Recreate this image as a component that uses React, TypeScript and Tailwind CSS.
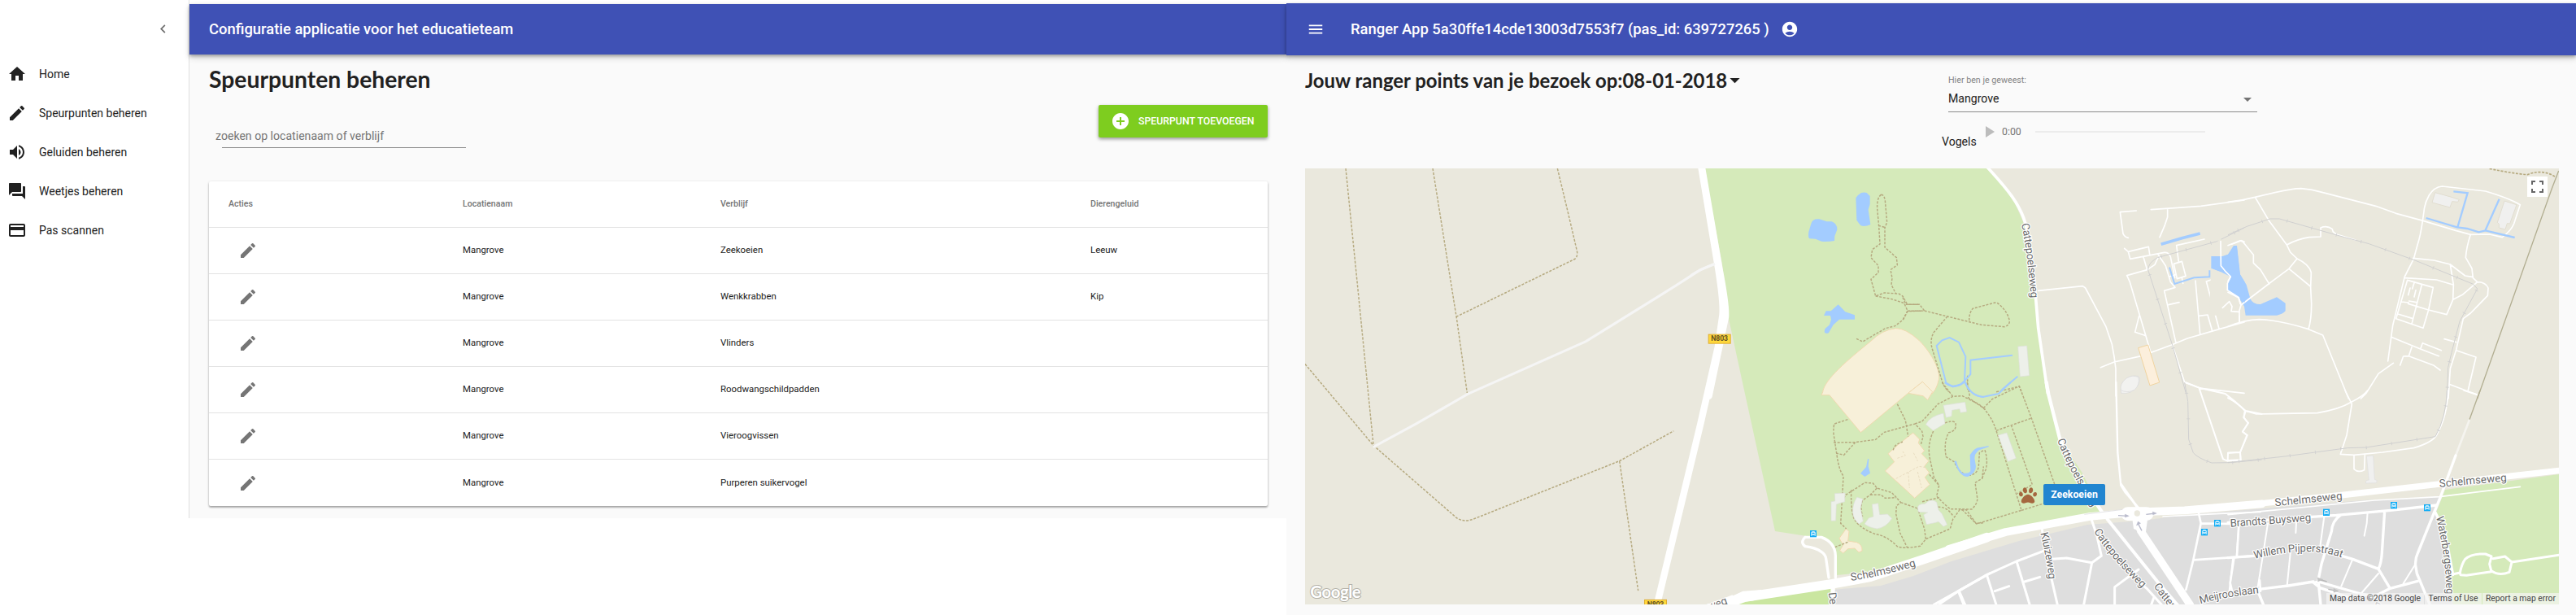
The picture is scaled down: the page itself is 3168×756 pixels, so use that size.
import React from "react";
import {
  MdHome, MdEdit, MdVolumeUp, MdForum, MdPayment, MdChevronLeft,
  MdAddCircle, MdMenu, MdAccountCircle, MdArrowDropDown,
} from "react-icons/md";
import { FaPaw } from "react-icons/fa";

const nav = [
  { label: "Home", Icon: MdHome },
  { label: "Speurpunten beheren", Icon: MdEdit },
  { label: "Geluiden beheren", Icon: MdVolumeUp },
  { label: "Weetjes beheren", Icon: MdForum },
  { label: "Pas scannen", Icon: MdPayment },
];

const rows = [
  ["Mangrove", "Zeekoeien", "Leeuw"],
  ["Mangrove", "Wenkkrabben", "Kip"],
  ["Mangrove", "Vlinders", ""],
  ["Mangrove", "Roodwangschildpadden", ""],
  ["Mangrove", "Vieroogvissen", ""],
  ["Mangrove", "Purperen suikervogel", ""],
];

const COLS = "grid grid-cols-[312px_317px_455px_1fr] items-center";

/* A map sector: its children use about three units to the pixel. */
function Sector({ x, y, sy = 3, children }: { x: number; y: number; sy?: number; children: React.ReactNode }) {
  return <g transform={`translate(${x} ${y}) scale(0.333333 ${1 / sy})`}>{children}</g>;
}

type LineProps = { d: string; w?: number; c?: string };

function Road({ d, w = 5, c = "#ffffff" }: LineProps) {
  return <path d={d} fill="none" stroke={c} strokeWidth={w} strokeLinejoin="round" strokeLinecap="round" />;
}

function Trail({ d, w = 4.4, c = "#b6aa80" }: LineProps) {
  return <path d={d} fill="none" stroke={c} strokeWidth={w} strokeDasharray="9 5" />;
}

function Rail({ d }: { d: string }) {
  return (
    <g fill="none" stroke="#d0d0d0">
      <path d={d} strokeWidth="3" />
      <path d={d} strokeWidth="13" strokeDasharray="2.5 92" strokeDashoffset="-40" />
    </g>
  );
}

function StreetName({ id, d, len, children }: { id: string; d: string; len: number; children: string }) {
  return (
    <g>
      <path id={id} d={d} fill="none" />
      <text fontFamily="Roboto, sans-serif" fontSize="40" fill="#6a6a6a" stroke="#ffffff" strokeWidth="7" strokeLinejoin="round" paintOrder="stroke" textLength={len}>
        <textPath href={`#${id}`}>{children}</textPath>
      </text>
    </g>
  );
}

function BusStop({ x, y }: { x: number; y: number }) {
  return (
    <g transform={`translate(${x} ${y})`}>
      <rect x="-12" y="-12" width="24" height="25" fill="#12adf5" />
      <path d="M-8 8V-3q0-5 5-5h6q5 0 5 5V8h-3v-2h-10v2z" fill="#fff" />
      <rect x="-5" y="-4" width="10" height="5" fill="#12adf5" />
      <rect x="-5" y="3" width="3" height="2" fill="#12adf5" />
      <rect x="2" y="3" width="3" height="2" fill="#12adf5" />
    </g>
  );
}

function Shield({ x, y }: { x: number; y: number }) {
  return (
    <g transform={`translate(${x} ${y})`}>
      <rect x="1.5" y="1.5" width="81" height="33" fill="#ffd83b" stroke="#e0af30" strokeWidth="3" />
      <text x="42" y="26" textAnchor="middle" fontFamily="Roboto, sans-serif" fontWeight="700" fontSize="26" fill="#5f4f22" textLength="62">N803</text>
    </g>
  );
}

function MapDrawing() {
  const water = "#a3ccff";
  const building = { fill: "#edf0ea", stroke: "#dcdfd8", strokeWidth: 2 };
  const sand = { fill: "#f7f0d9", stroke: "#f0d9b0", strokeWidth: 3 };
  return (
    <svg className="block h-full w-full" viewBox="1605 207 1542 536">
      <rect x="1605" y="207" width="1542" height="536" fill="#eae8dd" />
      {/* land areas */}
      <path fill="#d5eaba" d="M2096 207L2118 325 2126 392 2144 475 2183 653 2222 659 2242 660 2255 672 2259 707 2300 703 2345 692 2440 663 2520 642 2585 630 2560 580 2533 540 2515 470 2503 357 2490 277 2475 243 2462 225 2443 207z" />
      <path fill="#dedede" d="M2253 725L2313 720 2353 708 2400 690 2483 665 2567 645 2633 640 2700 632 2807 623 2907 615 3003 610 2997 630 3005 680 3017 743H2257z" />
      <path fill="#d5eaba" d="M3007 602L3147 583V743H3017L3005 680 2996 630z" />
      <path fill="#cae6a0" d="M2123 743L2135 738 2253 723 2257 743z" />

      {/* open fields in the west */}
      <Sector x={1590} y={200} sy={2.82}>
        <Trail d="M195 20L240 440 297 978M516 20L605 545 643 798M976 20Q1030 230 1049 310Q1050 328 1040 334L605 533M45 698L297 980 600 1228Q628 1250 670 1234L1205 1034 1405 930M1205 1034L1274 1484" />
        <Road d="M300 984L455 905 645 802 1080 620 1415 425 1500 373 1560 349" w={9} c="#f5f5f5" />
        <Road d="M1506 10L1570 370Q1590 490 1585 530L1568 640 1504 905 1344 1530" w={25} />
        <Road d="M1535 1536L1620 1505" w={12} />
        <Shield x={1296} y={1514} />
        <text x="64" y="1510" fontFamily="Lato, sans-serif" fontSize="61" fontWeight="700" fill="#ffffff" stroke="#b3b1a8" strokeWidth="6" paintOrder="stroke" textLength="187">Google</text>
      </Sector>

      {/* northern park */}
      <Sector x={2080} y={200}>
        <Road d="M0 415Q40 388 90 373" w={9} c="#f5f5f5" />
        <Road d="M36 0L103 390Q130 530 126 570L65 860" w={25} />
        <g fill={water}>
          <path d="M442 225q5-20 30-17l28 9 18 0q22 10 20 30l-9 24-1 17q-25 4-48 2l-22-9-22-1q-6-4-3-25z" />
          <path d="M607 130q15-25 40-19l12 12 0 30-6 20 8 55q-20 10-36 4l-15-20z" />
          <path d="M497 547h18l27-24 26 27 35 12v16h-57l-22 20-17 29q-10 6-16-2l2-12 17-15 6-20-3-14h-24z" />
        </g>
        <Trail d="M700 118Q712 118 715 140L722 220 714 240V312L757 350 760 377 735 395 741 425 738 450 754 482M700 118Q684 130 686 170L692 235 696 300 668 320 663 350 690 380 690 405 663 430 680 492 712 480 765 483 780 492 797 523H840M690 232L714 238M680 492L740 503 785 518 798 546 780 580 752 602 716 611 632 660 607 648M798 547H850" />
        <Shield x={62} y={632} />
      </Sector>

      <Sector x={2340} y={200}>
        <path {...sand} d="M-295 846C-290 800-200 725-120 660Q-75 615-25 611Q10 610 60 655C110 705 140 770 133 800Q125 840 100 860L73 808 20 850-155 995-270 857-300 857z" />
        <path {...sand} d="M20 850L73 808 110 845 92 875 75 860z" />
        <Trail d="M0 497L12 523H62L80 546 18 548 0 582M80 546L165 567 290 598 375 605Q395 600 394 582Q385 545 350 518L340 516 258 538Q242 560 246 587M165 567L115 625Q98 655 110 690L145 805Q150 825 170 845M239 785V840M345 845Q390 835 430 825L440 850" />
        <g fill="none" stroke={water} strokeWidth="6">
          <path d="M125 675L145 655 173 645 207 662 232 715 228 805 213 818 185 826 160 812zM405 710L250 728V780L228 805 240 830 250 842 M424 788L365 838" />
        </g>
        <path {...building} d="M425 678L458 675 467 785 433 789z" />
        <Road d="M306 10C360 70 440 150 456 240L485 430 500 610 535 850" w={11} />
        <Road d="M500 472L664 455 674 462 750 605 772 670 780 715 786 760V860M730 755L780 735 880 713 990 673 1050 648 1170 613 1260 588M862 177L802 182 813 262Q820 275 832 277M916 173L1100 160 1260 138M977 172V200L966 233 948 275M818 316L832 328 839 355 965 331M832 328L907 310 911 337M888 348L902 395 827 416 838 440 915 700M902 395L930 376 942 350M872 565L857 625 893 637M965 331Q982 330 988 347L1004 425M942 338L970 380 988 440 1005 460 965 472 1008 665M1113 282L1010 305 1018 365M1000 373L1030 364 1044 418 1012 428zM1030 425L1034 445M985 420L1007 413M980 524L1020 515M1080 435L1097 632M1173 290L1174 380 1190 400 1210 420 1198 470 1240 497 1245 520M1175 315L1250 287 1260 292M1195 412L1120 438 1167 612M1143 529L1208 512 1216 545 1242 550V590M1093 565L1125 561 1142 620" />
        <Road d="M995 673L1040 810 1100 832 1260 850" />
        <Rail d="M1260 240L1160 290 940 350Q905 370 905 395L995 673 1045 850" />
        <g fill="none" stroke={water}>
          <path d="M953 301L1030 278 1097 261" strokeWidth="11" />
          <path d="M984 386L1003 447 1075 424 1132 421V397" strokeWidth="6" />
        </g>
        <path fill="#fcefdc" stroke="#f0d4a0" strokeWidth="3" d="M869 683L905 672 947 810 912 822z" />
        <path fill="#f2f2f0" stroke="#dadada" strokeWidth="2" d="M806 850Q800 820 820 800Q845 780 870 788Q880 800 865 825Q845 855 806 850z" />
      </Sector>

      {/* zoo grounds */}
      <Sector x={2080} y={470}>
        <path {...sand} d="M818 186L842 210 838 224 860 252 850 263 876 290 860 310 878 333 862 350 880 377 824 427 795 400 715 327 749 293 726 263 765 228z" />
        <path {...sand} d="M571 540L582 550 578 585 610 590Q632 598 630 622L618 627 603 612 578 614 560 630 548 620 560 600 546 575z" />
        <Trail w={3} c="#e8dcc0" d="M755 355L840 310 870 315M760 280L790 270 780 255M820 260L835 290M835 330L850 390M800 330L805 390" />
        <Trail d="M577 137L528 153Q524 160 525 190L537 268Q545 325 561 345L556 440 551 520 572 540M525 222L605 221 680 211 712 184 825 153 851 180 855 200 847 230M760 80L790 140 800 200M605 221L563 268 537 262M745 250Q748 228 780 220M825 153L851 144 910 80 965 52 1000 50 1060 80 1085 100M965 52L925 0M1027 50L1018 0M893 180Q870 230 880 280L895 350 914 380 905 420 935 450 955 467 1035 468Q1058 445 1055 425L1047 370 1073 355 1078 310M878 340L914 380M935 150Q965 138 975 150Q980 180 950 185Q930 220 940 275L970 293Q990 340 1025 343Q1055 340 1060 310L1063 260 1080 250M556 440L570 415 640 370 670 372 685 390 740 407 773 443 757 455 755 485 770 555 797 610M773 443L835 465M685 390L660 415 632 435Q622 460 632 495M590 397Q588 490 605 510Q625 540 680 560Q720 565 760 605 Q780 615 845 604L865 578 955 540 965 505 990 470 1015 470 1050 520 1080 518M660 415L700 415 715 427 757 425M852 440L915 425M865 578L860 540 835 465M910 460Q945 458 967 495M530 608L580 588" />
        <g {...building}>
          <path d="M930 85L1010 73 1016 108 993 112 990 98 962 103 960 125 940 130z" />
          <path d="M865 155Q880 125 930 114L936 152 892 178z" />
          <path d="M529 410L567 408 566 440 549 445 535 450 533 510 516 511 516 440 530 438z" />
          <path d="M611 424L632 430 624 465 634 512 619 522Q597 505 596 480Q594 450 611 424z" />
          <path d="M667 450L689 446 695 488 724 486 740 502Q720 535 685 540Q655 535 639 522L655 500 672 495z" />
          <path d="M835 463Q836 448 862 448Q885 425 905 442L912 470 925 485 944 525 930 532 912 514 898 518 868 524 857 488 872 480 838 478z" />
        </g>
        <path fill={water} d="M651 282L655 283 653 310 660 335 640 348 624 336 645 312z" />
        <path fill={water} d="M970 290L978 290Q985 320 1000 333Q1020 340 1030 328L1028 268Q1045 240 1065 240L1097 234V238L1062 250Q1045 262 1045 280L1050 310Q1050 335 1020 348Q990 350 970 290z" />
        <path fill="none" stroke={water} strokeWidth="6" d="M935 0Q965 28 1005 0M1010 0Q1030 50 1080 54" />
        <path fill="#eae8dd" d="M412 590L440 575 485 575 525 610 533 710 510 715 497 640 440 605z" />
        <Road w={10} d="M420 571L480 571Q531 590 532 640V720M420 571Q400 590 420 605Q460 610 480 625Q495 635 497 650L507 720" />
        <Road d="M70 840L195 793 520 743 660 718 860 652 1090 572" w={35} />
        <path fill="#fff" d="M60 830L190 770 260 765 230 805 180 811 120 818z" />
        <Road d="M523 740L520 830" w={16} />
        <Road d="M915 818L985 770 1100 705M988 770L1010 820" w={9} />
        <BusStop x={450} y={558} />
        <StreetName id="sch-west" d="M590 732Q700 715 836 676" len={246}>Schelmseweg</StreetName>
        <StreetName id="de-street" d="M506 776L520 900" len={44}>De</StreetName>
        <StreetName id="eg-street" d="M-90 900L145 812" len={240}>Schelmseweg</StreetName>
      </Sector>

      {/* neighbourhood south of the park */}
      <Sector x={2400} y={470}>
        <path fill="none" stroke={water} strokeWidth="6" d="M0 15Q30 15 45 0M50 0Q70 50 115 54L173 42 218 0" />
        <Trail d="M118 95L150 62 250 14 295 132 380 375M60 55L118 95Q150 130 165 178L258 472 92 522 40 470M165 178L295 132M220 157L298 377 243 410M258 472L340 447M123 250Q135 285 127 320L112 355" />
        <path {...building} d="M172 195L204 186 238 280 208 292z" />
        <path fill="#f2f2f0" stroke="#dadada" strokeWidth="2" d="M625 28Q620 5 645-15Q670-30 690-18Q695 10 675 28Q645 42 625 28z" />
        <Road d="M350 0L358 45 400 210 470 350 555 478" w={13} />
        <Road d="M607 0L613 260 625 380 640 405 690 462" w={7} />
        <Road d="M625 375L685 460" w={9} />
        <Road d="M863 0L913 20 1010 42 1045 70 1085 105 1078 130 1095 150 1074 182 1090 195 1065 258M913 20L1002 283 1018 290M1020 260L1065 258 1067 286 1019 288zM1085 105L1145 117" w={6} />
        <Rail d="M860 0L872 70 875 210 892 260Q910 280 960 297L1030 296 1145 285" />
        <Road d="M-10 615L200 552 510 495 690 478 860 472 1145 448" w={29} />
        <path fill="none" stroke="#d6d6da" strokeWidth="2" d="M490 487L640 468M780 500L920 486" />
        <Road d="M650 485L720 485" w={50} />
        <Road d="M685 500L698 548 880 820" w={28} />
        <path fill="#fff" d="M665 490H725L716 560 672 540z" />
        <circle cx="685" cy="483" r="11" fill="#eae8dd" />
        <g fill="none" stroke="#b8bacb" strokeWidth="4">
          <path d="M615 491L650 493M718 487L752 483M702 547L688 520" />
          <path d="M640 486L655 493 640 498zM742 477L757 483 743 489zM682 528L688 513 698 520z" fill="#b8bacb" strokeWidth="1" />
        </g>
        <Road d="M333 535L345 620 392 825M345 620L240 660 130 710 25 770-65 820M25 770L45 820M130 710L165 820M160 770L212 752M240 660L290 825M270 735L326 718M370 652L425 648 518 665 487 825M518 665L553 640 535 560 517 508M690 690L602 755V825M655 705L720 760 775 820M735 825L748 790" w={9} />
        <Road d="M575 505L760 735 850 840" w={12} />
        <Road d="M912 483L920 520 892 655 865 765M920 520L1040 522M892 655L1120 640M1060 525L1053 640M1042 650L1028 740 1035 770M1137 730L1140 770" w={8} />
        <Road d="M780 495L990 484 1140 478" w={5} />
        <BusStop x={981} y={519} /><BusStop x={933} y={552} />
        <StreetName id="catt-mid" d="M390 213Q430 320 520 462" len={280}>Cattepoelseweg</StreetName>
        <StreetName id="kluize" d="M328 557Q350 640 360 735" len={173}>Kluizeweg</StreetName>
        <StreetName id="catt-low" d="M525 550Q580 640 702 758" len={275}>Cattepoelseweg</StreetName>
        <StreetName id="catt-east" d="M746 752Q790 820 900 940" len={275}>Cattepoelseweg</StreetName>
      </Sector>

      {/* eastern grounds */}
      <Sector x={2740} y={200}>
        <path fill={water} d="M-62 345L-32 335-18 310-8 306 32 306 44 412 68 450 82 500Q90 522 120 522L180 496 212 518V547Q200 560 180 563H65L60 530 40 497-3 470 0 440-22 405-62 390z" />
        <path fill="#eae8dd" d="M-5 300L22 304 0 338-20 345-62 345-70 330-30 280z" />
        <path fill="#eae8dd" d="M-62 390L-22 405 10 420 0 438-5 470 40 497 48 525 60 563H-70z" />
        <Road d="M0 145Q50 140 100 127Q230 95 270 95Q310 98 350 110L545 160 620 187 720 214 840 250 895 265 965 264 1012 275Q1045 250 1055 225L1078 155Q1040 132 950 105L790 87Q760 90 742 120Q725 150 723 180L718 215Q710 270 700 300L685 355 652 420 625 530 608 600 590 732M100 127L150 212 217 303 230 330 255 354 225 391 150 447 48 525M217 303Q260 280 300 275L342 273V240Q365 230 385 245Q385 262 420 270L470 285M255 354Q300 375 307 405L305 460 308 520Q308 580 297 614M225 391L304 456M0 305L45 287 55 292 94 340V370L120 395 152 447M-20 535L5 512 15 530 12 548 40 550M48 525L42 545V590M0 604Q60 580 115 578Q190 580 297 614L350 636 445 870M0 478L38 497 48 525M0 405L10 420 0 437" />
        <Road d="M895 265Q880 310 877 350L900 390 904 425 920 440Q950 440 960 462L958 490 895 555 868 575 842 690 820 760 813 870M683 352L760 360 820 375 832 450 830 505 807 560 740 543 665 520M820 375L875 417 904 422M830 505L865 487 920 440M652 425L770 432 830 450M662 433L757 460 740 543 720 610 620 575 662 433M715 450L697 520 678 595M640 513L667 516M668 510L695 515M627 558L680 574M688 440L680 465M672 462L665 488M693 470L687 495M602 643L710 687 778 713M710 687L718 665 787 692M678 680L667 713 647 714 635 747M667 713L760 748 783 765M610 739L555 778 510 850 490 870M798 650L842 662M842 692L915 717 885 843 820 818M885 843L920 855" />
        <Road d="M0 868L15 875" />
        <Rail d="M0 266L70 235 155 207 190 207 430 275 520 299 690 360 905 448 920 465 855 585 825 700 812 755 808 870" />
        <g fill="none" stroke={water} strokeWidth="7">
          <path d="M832 106L884 112 847 238M1001 134L950 248M731 204L845 238 882 243 925 256 950 250 1058 276" />
        </g>
        <g fill="#f0f0ef" stroke="#e1ddd0" strokeWidth="3">
          <path d="M764 110L825 127 853 136 848 145 827 143 819 165 753 147z" />
          <path d="M1020 141L1065 155 1040 225 1030 224 1023 246 1000 240 1000 226 994 220z" />
        </g>
        <Trail d="M965 22Q1050 40 1105 44Q1140 30 1170 37Q1190 40 1212 55" w={5} />
        <path d="M1220 30L1195 95 920 870" fill="none" stroke="#b2ae91" strokeWidth="4" />
      </Sector>
      {/* lake shore west of the eastern grounds */}
      <Sector x={2340} y={200}>
        <path fill={water} d="M1178 348L1208 335 1222 310 1233 306 1245 412 1262 440V515L1240 497 1198 470 1200 447 1212 424 1180 385z" />
        <Road d="M1173 290L1174 380 1190 400 1210 420 1198 445V470L1240 497 1245 520" />
      </Sector>

      <Sector x={2740} y={480}>
        <Road d="M0 27Q40 50 62 75L105 87 330 83Q410 70 455 43Q500 20 515 0M432 0L457 50 438 165 415 235 465 238 570 228 685 212Q760 190 772 160Q810 90 812 0M465 238V290Q480 305 503 293L505 238M62 75L58 98 74 120 54 152 72 165 45 228M0 230L45 228 47 256 0 260M870 0L920 16" />
        <Rail d="M0 266L210 243 440 212 510 210 765 170Q805 100 808 0" />
        <path d="M930 0L890 110" stroke="#b2ae91" strokeWidth="4" />
        <Road d="M890 110L840 240" w={8} c="#f5f4ef" />
        <path fill="#f0f0ef" stroke="#dedede" strokeWidth="2" d="M511 242L536 240 541 328 550 332 547 341 508 342 510 332 520 330z" />
        <Road d="M-10 430L420 386 780 345 1225 295" w={23} />
        <Road d="M0 458L540 405 780 392 1078 355" w={5} />
        <Road d="M840 240L785 390 700 600Q690 620 692 645L697 675 745 790" w={10} />
        <Road d="M0 487L400 460 600 442 770 423M415 460Q385 480 382 520L345 640 333 700 342 790M578 445L568 600Q565 640 555 658L598 730 540 760 490 750 333 705 320 708M555 658L460 622 420 610M0 617L95 610M115 733L222 720 315 705M315 708L340 728 480 775M598 730L700 703M108 735L130 788M765 450L800 520 830 680" w={10} />
        <Road d="M40 500L32 610M147 490L127 620 110 725M252 485L250 525M355 465L338 590M515 450L512 490 503 536M230 600L218 720M18 622L5 740M460 622L418 722M555 675L490 750M692 640L647 712" w={6} />
        <path fill="#d5eaba" d="M862 640h100v28h-98z" />
        <Road w={9} d="M832 677L856 672Q862 640 875 622Q900 600 950 603L972 612 965 640 972 668 880 682 858 680 856 672M978 620L1022 612 1047 633 1038 670Q1000 685 972 665M1047 633L1225 606" />
        <g fill="none" stroke="#b9b9b9" strokeWidth="4">
          <path d="M335 696L365 705M370 733L405 740" />
          <path d="M330 690L350 697 332 705zM390 730L408 740 390 745z" fill="#c4c4c4" strokeWidth="1" />
        </g>
        <BusStop x={363} y={449} /><BusStop x={612} y={423} /><BusStop x={735} y={432} />
        <StreetName id="sch-mid" d="M174 427L424 401" len={250}>Schelmseweg</StreetName>
        <StreetName id="sch-east" d="M781 357Q900 345 1031 334" len={249}>Schelmseweg</StreetName>
        <StreetName id="brandts" d="M9 503L309 481" len={299}>Brandts Buysweg</StreetName>
        <StreetName id="willem" d="M98 621Q300 570 420 617" len={326}>Willem Pijperstraat</StreetName>
        <StreetName id="meijroos" d="M-102 787Q-20 762 118 747" len={220}>Meijrooslaan</StreetName>
        <StreetName id="waterberg" d="M768 467Q805 620 806 765" len={288}>Waterbergseweg</StreetName>
        <StreetName id="edge-name" d="M535 806L640 840" len={110}>Ruychrock</StreetName>
      </Sector>

      <Sector x={2340} y={200}>
        <StreetName id="catt-north" d="M438 226Q460 330 473 505" len={276}>Cattepoelseweg</StreetName>
      </Sector>
    </svg>
  );
}

function Sidebar() {
  return (
    <aside className="flex w-[233px] shrink-0 flex-col border-r border-[#e0e0e0] bg-white">
      <div className="flex h-[67px] items-center justify-end pt-1 pr-[21px] text-[#6f6f6f]">
        <MdChevronLeft size={21} />
      </div>
      <nav className="flex flex-col">
        {nav.map(({ label, Icon }) => (
          <a key={label} className="flex h-12 items-center gap-[15px] pl-[9px] text-[14px] text-[#212121]">
            <Icon size={24} />
            <span>{label}</span>
          </a>
        ))}
      </nav>
    </aside>
  );
}

function AdminPanel() {
  return (
    <section className="flex h-[637px] w-[1582px] shrink-0">
      <Sidebar />
      <main className="flex min-w-0 flex-1 flex-col pt-[5px]">
        <header className="relative flex h-[62px] shrink-0 items-center bg-[#3f51b5] pl-6 shadow-[0_2px_4px_rgba(0,0,0,0.3),0_4px_8px_rgba(0,0,0,0.14)]">
          <span className="text-[18.4px] font-medium text-white">Configuratie applicatie voor het educatieteam</span>
        </header>
        <div className="flex flex-1 flex-col bg-[#fafafa] pr-[23px] pl-6">
          <h1 className="mt-3 mb-[2px] font-['Lato'] text-[28.3px] leading-9 font-bold text-[#212121]">Speurpunten beheren</h1>
          <div className="flex h-[106px] items-start justify-between">
            <div className="mt-[38px] w-[316px] pl-2 text-[14.1px] leading-6 text-[#757575]">
              <div>zoeken op locatienaam of verblijf</div>
              <div className="mt-[2px] ml-2 h-px bg-[#8a8a8a]" />
            </div>
            <button className="mt-3 flex h-10 w-[208px] items-center gap-[10px] rounded-[2px] bg-[#7ecd1f] pl-[15px] text-[12.3px] font-medium whitespace-nowrap text-white shadow-[0_2px_4px_rgba(0,0,0,0.4)]">
              <MdAddCircle size={24} className="shrink-0" />
              <span>SPEURPUNT TOEVOEGEN</span>
            </button>
          </div>
          <div className="rounded-[2px] bg-white shadow-[0_1px_3px_rgba(0,0,0,0.25),0_2px_2px_rgba(0,0,0,0.2)]">
            <div className={`${COLS} h-[57px] border-b border-[#e3e3e3] text-[10.6px] font-medium text-[#757575]`}>
              <div className="pl-6">Acties</div><div>Locatienaam</div><div>Verblijf</div><div>Dierengeluid</div>
            </div>
            {rows.map((r) => (
              <div key={r[1]} className={`${COLS} h-[57px] border-b border-[#e3e3e3] text-[11.4px] text-[#212121] last:border-b-0`}>
                <div className="pl-9 text-[#757575]"><MdEdit size={24} /></div>
                <div>{r[0]}</div><div>{r[1]}</div><div>{r[2]}</div>
              </div>
            ))}
          </div>
        </div>
      </main>
    </section>
  );
}

function RangerPanel() {
  return (
    <section className="flex h-full min-w-0 flex-1 flex-col pt-1">
      <header className="relative flex h-16 shrink-0 items-center bg-[#3f51b5] pl-[25px] text-white shadow-[0_2px_4px_rgba(0,0,0,0.3),0_4px_8px_rgba(0,0,0,0.14)]">
        <MdMenu size={22} />
        <span className="ml-[32px] text-[18.4px] font-medium">Ranger App 5a30ffe14cde13003d7553f7 (pas_id: 639727265 )</span>
        <MdAccountCircle size={22} className="ml-[14px]" />
      </header>
      <div className="flex flex-1 flex-col bg-[#fafafa] pr-[21px] pl-[23px]">
        <div className="flex h-[139px]">
          <div className="flex h-9 w-[783px] items-center pt-[25px]">
            <h2 className="flex items-center font-['Lato'] text-[23.9px] font-bold whitespace-nowrap text-[#212121]">
              Jouw ranger points van je bezoek op:08-01-2018
              <MdArrowDropDown size={29} className="-ml-[5px]" />
            </h2>
          </div>
          <div className="flex flex-col pt-[23px]">
            <div className="ml-2 w-[380px] border-b border-[#8a8a8a]">
              <div className="text-[10.7px] leading-4 text-[#858585]">Hier ben je geweest:</div>
              <div className="flex h-[30px] items-center justify-between text-[14.1px] text-[#212121]">
                <span>Mangrove</span>
                <MdArrowDropDown size={24} className="text-[#757575]" />
              </div>
            </div>
            <div className="flex items-start pt-[13px]">
              <span className="mt-[11px] w-[42px] text-[14.1px] leading-6 text-[#212121]">Vogels</span>
              <svg className="mt-[4px] ml-3 h-[14px] w-[11px]" viewBox="0 0 11 14"><path d="M0 0L11 7 0 14z" fill="#bcbcbc" /></svg>
              <span className="-mt-px ml-[9px] w-[41px] text-[12.3px] leading-6 text-[#757575]">0:00</span>
              <div className="mt-[10px] h-[2px] w-[209px] bg-[#ececec]" />
            </div>
          </div>
        </div>
        <div className="relative h-[536px] w-[1542px] overflow-hidden">
          <MapDrawing />
          <FaPaw className="absolute top-[391px] left-[878px] text-[#a5673f]" size={22} />
          <div className="absolute top-[388px] left-[908px] flex h-[26px] w-[76px] items-center justify-center rounded-[2px] bg-[#2185d0] text-[12.3px] font-bold text-white">Zeekoeien</div>
          <div className="absolute top-[10px] right-[14px] flex h-[25px] w-[25px] items-center justify-center bg-white">
            <svg className="h-[15px] w-[15px]" viewBox="0 0 15 15"><path d="M1 5V1H5M10 1H14V5M14 10V14H10M5 14H1V10" fill="none" stroke="#666" strokeWidth="2" /></svg>
          </div>
          <div className="absolute right-0 bottom-0 flex h-[14px] text-[10.3px] leading-[14px] whitespace-nowrap text-[#444]">
            <div className="w-[120px] bg-[#f5f5f5]/70 text-center">Map data ©2018 Google</div>
            <div className="ml-px w-[70px] bg-[#f5f5f5]/70 text-center">Terms of Use</div>
            <div className="ml-px w-[94px] bg-[#f5f5f5]/70 text-center">Report a map error</div>
          </div>
        </div>
      </div>
    </section>
  );
}

export default function App() {
  return (
    <div className="flex h-[756px] w-[3168px] overflow-hidden bg-white font-['Roboto',sans-serif]">
      <AdminPanel />
      <RangerPanel />
    </div>
  );
}
